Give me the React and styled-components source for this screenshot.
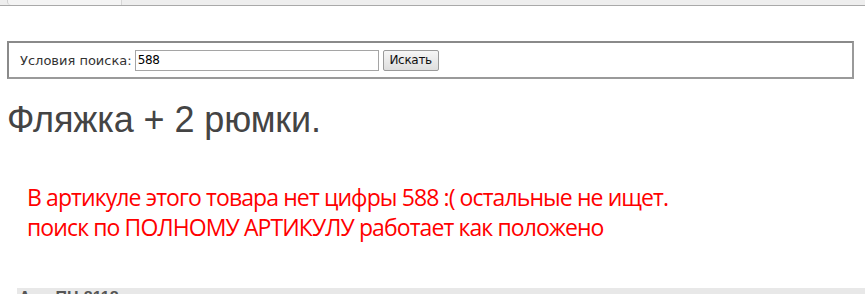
import React from 'react';
import styled, { createGlobalStyle } from 'styled-components';

const GlobalStyle = createGlobalStyle`
  html, body {
    margin: 0;
    padding: 0;
    background: #fff;
    overflow: hidden;
  }
  body {
    font-family: "DejaVu Sans", Verdana, sans-serif;
  }
`;

const Page = styled.div`
  width: 865px;
  height: 294px;
  overflow: hidden;
`;

const TopBar = styled.div`
  height: 5px;
  background: #eeeeee;
  border-bottom: 1px solid #a9a9a9;
  display: flex;
`;

const TopTab = styled.div`
  margin-left: 7px;
  width: 113px;
  background: #f4f4f4;
  border-left: 1px solid #d0d0d0;
  border-right: 1px solid #d6d6d6;
  border-bottom-left-radius: 4px;
`;

const SearchForm = styled.form`
  margin: 35px 11px 0 7px;
  height: 34px;
  border: 2px solid #8a8a8a;
  border-right-color: #9a9a9a;
  border-bottom-color: #9a9a9a;
  display: flex;
  align-items: center;
  padding: 0 0 0 11px;
  box-sizing: content-box;
`;

const Label = styled.label`
  font-family: "DejaVu Sans", Tahoma, sans-serif;
  font-size: 13px;
  color: #333;
  margin-right: 3px;
`;

const Input = styled.input`
  width: 238px;
  height: 19px;
  padding: 0 2px;
  border: 1px solid #a5a5a5;
  font-family: "DejaVu Sans", Tahoma, sans-serif;
  font-size: 12px;
  color: #000;
  letter-spacing: -0.4px;
  box-sizing: content-box;
  outline: none;
`;

const Button = styled.button`
  margin-left: 4px;
  height: 21px;
  width: 56px;
  padding: 0;
  border: 1px solid #9a9a9a;
  border-radius: 2px;
  background: linear-gradient(#f6f6f6, #dedede);
  font-family: "DejaVu Sans", Tahoma, sans-serif;
  font-size: 12px;
  color: #111;
  letter-spacing: -0.3px;
`;

const Title = styled.h1`
  margin: 20px 0 0 7px;
  font-family: "Liberation Sans", Arial, sans-serif;
  font-weight: normal;
  font-size: 36px;
  line-height: 42px;
  color: #444;
  letter-spacing: -0.1px;
`;

const Note = styled.p`
  margin: 41px 0 0 27px;
  font-family: "Open Sans", sans-serif;
  font-size: 23px;
  line-height: 30px;
  color: #ff0000;
  letter-spacing: -0.9px;
`;

const BottomBar = styled.div`
  margin: 46px 0 0 17px;
  height: 20px;
  background: #e8e8e8;
  padding: 1px 0 0 2px;
  font-family: "Liberation Sans", Arial, sans-serif;
  font-weight: bold;
  font-size: 16px;
  line-height: 18px;
  color: #555;
`;

export default function App() {
  return (
    <Page>
      <GlobalStyle />
      <TopBar>
        <TopTab />
      </TopBar>
      <SearchForm onSubmit={e => e.preventDefault()}>
        <Label>Условия поиска:</Label>
        <Input type="text" defaultValue="588" />
        <Button type="submit">Искать</Button>
      </SearchForm>
      <Title>Фляжка + 2 рюмки.</Title>
      <Note>
        В артикуле этого товара нет цифры 588 :( остальные не ищет.
        <br />
        поиск по ПОЛНОМУ АРТИКУЛУ работает как положено
      </Note>
      <BottomBar>Арт. ПН-8118</BottomBar>
    </Page>
  );
}
